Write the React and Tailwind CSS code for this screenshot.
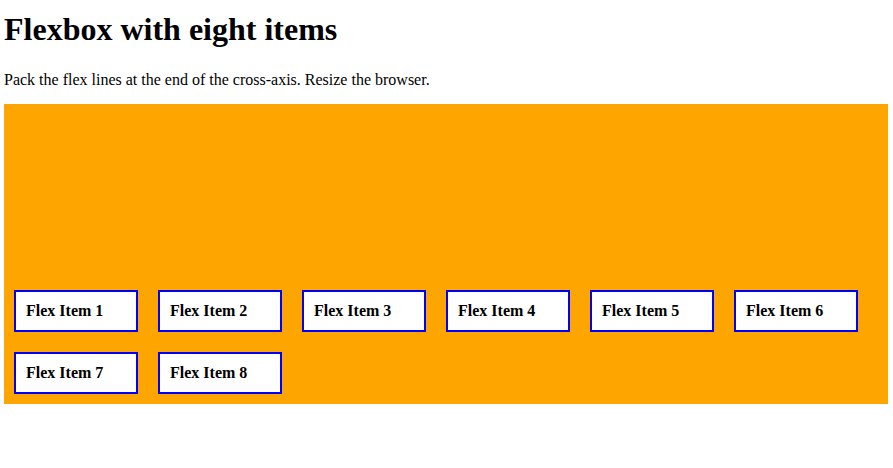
export default function App() {
  const items = [1, 2, 3, 4, 5, 6, 7, 8];
  return (
    <div className="pl-[4px] pr-[5px] bg-white text-black font-['Liberation_Serif',serif]">
      <h1 className="mt-[11px] mb-[23px] text-[32px] leading-[37px] font-bold">Flexbox with eight items</h1>
      <p className="text-[16px] leading-[18px]">Pack the flex lines at the end of the cross-axis. Resize the browser.</p>
      <div className="mt-[15px] h-[300px] bg-[#ffa500] flex flex-wrap content-end">
        {items.map((n) => (
          <div key={n} className="m-[10px] w-[124px] p-[10px] border-2 border-[#0000ff] bg-white text-[16px] leading-[18px] font-bold">
            Flex Item {n}
          </div>
        ))}
      </div>
    </div>
  );
}
